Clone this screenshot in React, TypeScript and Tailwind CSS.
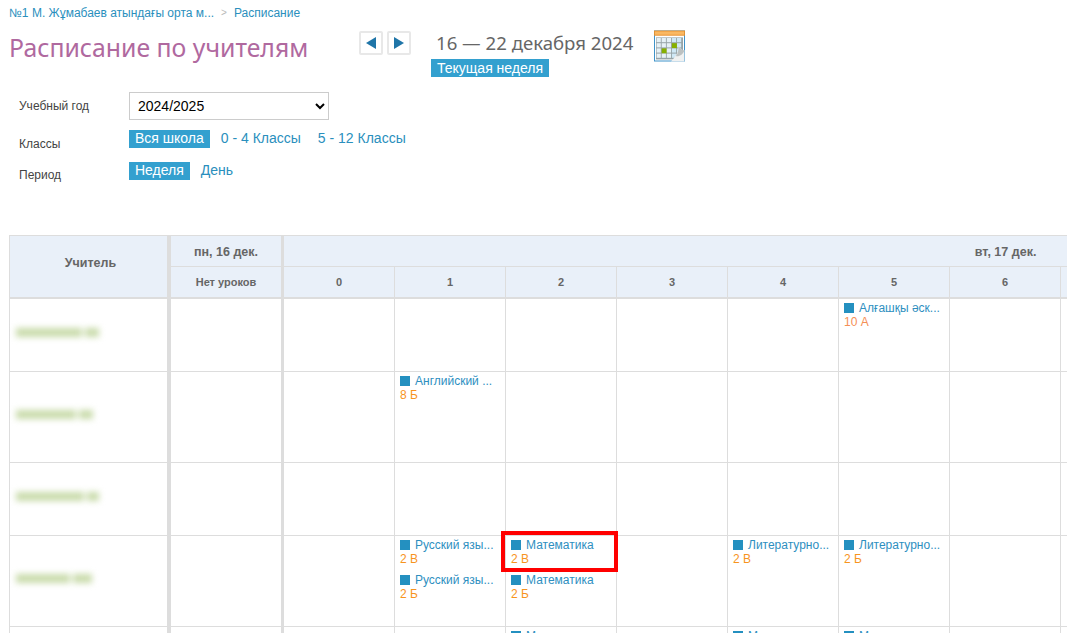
import React from "react";

const periods = [0, 1, 2, 3, 4, 5, 6, 7, 8, 9, 10, 11, 12];

type Lesson = { subject: string; group: string; tone?: string; marked?: boolean };
type Row = {
  height: string;
  bars: string[];
  slots: Record<number, Lesson[]>;
};

const rows: Row[] = [
  {
    height: "h-[73px]",
    bars: ["w-[66px]", "w-[14px]"],
    slots: { 5: [{ subject: "Алғашқы әск...", group: "10 А", tone: "text-[#f58f55]" }] },
  },
  {
    height: "h-[91px]",
    bars: ["w-[60px]", "w-[14px]"],
    slots: { 1: [{ subject: "Английский ...", group: "8 Б" }] },
  },
  {
    height: "h-[73px]",
    bars: ["w-[68px]", "w-[12px]"],
    slots: {},
  },
  {
    height: "h-[91px]",
    bars: ["w-[54px]", "w-[19px]"],
    slots: {
      1: [
        { subject: "Русский язы...", group: "2 В" },
        { subject: "Русский язы...", group: "2 Б" },
      ],
      2: [
        { subject: "Математика", group: "2 В", marked: true },
        { subject: "Математика", group: "2 Б" },
      ],
      4: [{ subject: "Литературно...", group: "2 В" }],
      5: [{ subject: "Литературно...", group: "2 Б" }],
    },
  },
  {
    height: "h-[91px]",
    bars: [],
    slots: {
      2: [{ subject: "Математика", group: "2 В" }],
      4: [{ subject: "Математика", group: "2 В" }],
      5: [{ subject: "Математика", group: "2 Б" }],
    },
  },
];

function ArrowButton({ dir }: { dir: "left" | "right" }) {
  return (
    <button className="flex h-[24px] w-[24px] items-center justify-center rounded-[2px] border-2 border-[#e8e8e8] bg-white">
      <svg width="12" height="14" viewBox="0 0 12 14">
        {dir === "left" ? (
          <path d="M11 1v12L1 7z" fill="#1f75a8" />
        ) : (
          <path d="M1 1v12l10-6z" fill="#1f75a8" />
        )}
      </svg>
    </button>
  );
}

function CalendarIcon() {
  const cells: React.ReactNode[] = [];
  for (let r = 0; r < 4; r++) {
    for (let c = 0; c < 5; c++) {
      const green = (r === 1 && c === 3) || (r === 2 && c === 1);
      cells.push(
        <rect
          key={`${r}-${c}`}
          x={2.6 + c * 5.1}
          y={8 + r * 5.2}
          width={green ? 5 : 4.2}
          height={green ? 5 : 4.2}
          fill={green ? "#86b000" : c > 2 ? "#cfe8f6" : "#e6f1f6"}
        />
      );
    }
  }
  return (
    <svg width="31" height="33" viewBox="0 0 31 33" className="shrink-0">
      <rect x="0.5" y="1" width="30" height="30" fill="#ffffff" stroke="#3f93c9" />
      <rect x="0.4" y="1" width="30.2" height="4.2" fill="#f9b863" stroke="#e88f28" strokeWidth="0.9" />
      <rect x="2" y="7.4" width="27" height="22" fill="#97a4a8" />
      {cells}
      <path d="M17 31.5 L30.5 31.5 L30.5 20 C27.5 21 27 18 24.5 16.5 C24.5 23 21 27 17 31.5z" fill="#f0f1f1" />
      <path d="M21.5 26 C23.5 25 24.5 21 24.5 16.5 C27 18 27.5 21 30.5 20 C29 25 25 27 21.5 26z" fill="#bcc1c1" />
    </svg>
  );
}

function LessonItem({ lesson }: { lesson: Lesson }) {
  return (
    <div className="relative h-[35px] text-[12px] leading-[14px]">
      {lesson.marked && (
        <div className="absolute -left-[10px] -top-[6px] h-[41px] w-[117px] border-4 border-[#ff0000]" />
      )}
      <div className="flex h-[15px] items-center whitespace-nowrap text-[#2e8fbf]">
        <span className="mr-[5px] h-[10px] w-[10px] shrink-0 bg-[#2490c0]" />
        <span>{lesson.subject}</span>
      </div>
      <div className={lesson.tone ?? "text-[#f7941e]"}>{lesson.group}</div>
    </div>
  );
}

function Tag({ children }: { children: React.ReactNode }) {
  return (
    <span className="flex h-[18px] items-center bg-[#33a0cf] px-[6px] text-[14px] text-white">
      {children}
    </span>
  );
}

export default function App() {
  return (
    <div
      className="h-[633px] w-[1067px] overflow-hidden bg-white text-[#333333]"
      style={{ fontFamily: '"Liberation Sans", Arial, sans-serif' }}
    >
      <div className="flex items-center gap-[7px] pl-[9px] pt-[6px] text-[12px] leading-[14px] text-[#2a8fbd]">
        <span>№1 М. Жұмабаев атындағы орта м...</span>
        <span className="text-[10px] text-[#b9b9b9]">&gt;</span>
        <span>Расписание</span>
      </div>

      <div className="flex items-start pl-[9px] pt-[10px]">
        <h1 className="w-[350px] text-[24.8px] leading-[34px] text-[#b0699f] [font-family:'Noto_Sans',sans-serif]">
          Расписание по учителям
        </h1>
        <div className="mt-[1px] flex gap-[4px]">
          <ArrowButton dir="left" />
          <ArrowButton dir="right" />
        </div>
        <div className="ml-[20px] flex w-[223px] flex-col items-start">
          <div className="ml-[5px] whitespace-nowrap text-[18.6px] leading-[26px] text-[#666666] [font-family:'Noto_Sans',sans-serif]">
            16 — 22 декабря 2024
          </div>
          <span className="mt-[3px] flex h-[18px] items-center bg-[#33a0cf] px-[6px] text-[14px] text-white">
            Текущая неделя
          </span>
        </div>
        <CalendarIcon />
      </div>

      <div className="mt-[15px] flex flex-col pl-[19px] text-[12px]">
        <div className="flex items-center">
          <span className="w-[110px] text-[#444444]">Учебный год</span>
          <select className="h-[28px] w-[200px] border border-[#cccccc] bg-white pl-[4px] text-[14px] text-black">
            <option>2024/2025</option>
          </select>
        </div>
        <div className="mt-[8px] flex items-start">
          <span className="w-[110px] pt-[7px] text-[#444444]">Классы</span>
          <div className="flex items-center text-[14px] text-[#2a8fbd]">
            <Tag>Вся школа</Tag>
            <span className="ml-[11px]">0 - 4 Классы</span>
            <span className="ml-[17px]">5 - 12 Классы</span>
          </div>
        </div>
        <div className="mt-[7px] flex items-start">
          <span className="w-[110px] pt-[6px] text-[#444444]">Период</span>
          <div className="flex items-center text-[14px] text-[#2a8fbd]">
            <Tag>Неделя</Tag>
            <span className="ml-[11px]">День</span>
          </div>
        </div>
      </div>

      <div className="ml-[9px] mt-[51px] w-[1058px] overflow-hidden">
        <table className="w-[1718px] table-fixed border-separate border-spacing-0">
          <colgroup>
            <col className="w-[162px]" />
            <col className="w-[113px]" />
            {periods.map((p) => (
              <col key={p} className="w-[111px]" />
            ))}
          </colgroup>
          <thead className="text-[#666666]">
            <tr className="h-[32px]">
              <th
                rowSpan={2}
                className="border-y border-b-2 border-l border-r-4 border-[#dddddd] bg-[#e9f0f9] pb-[6px] pl-[4px] text-[12.5px]"
              >
                Учитель
              </th>
              <th className="border-b border-r-[3px] border-t border-[#dddddd] bg-[#e9f0f9] pt-[2px] text-[12.5px]">
                пн, 16 дек.
              </th>
              <th
                colSpan={13}
                className="border-b border-t border-[#dddddd] bg-[#e9f0f9] pt-[2px] text-[12.5px]"
              >
                вт, 17 дек.
              </th>
            </tr>
            <tr className="h-[32px]">
              <th className="border-b-2 border-r-[3px] border-[#dddddd] bg-[#e9f0f9] text-[11px]">
                Нет уроков
              </th>
              {periods.map((p) => (
                <th
                  key={p}
                  className="border-b-2 border-r border-[#dddddd] bg-[#e9f0f9] text-[11px]"
                >
                  {p}
                </th>
              ))}
            </tr>
          </thead>
          <tbody>
            {rows.map((row, i) => (
              <tr key={i} className={row.height}>
                <td className="border-b border-l border-r-4 border-[#dddddd] px-[6px] pb-[5px] align-middle">
                  <div className="flex items-center gap-[3px] blur-[3px]">
                    {row.bars.map((b, j) => (
                      <span key={j} className={`h-[9px] bg-[#c9dbab] ${b}`} />
                    ))}
                  </div>
                </td>
                <td className="border-b border-r-[3px] border-[#dddddd]" />
                {periods.map((p) => (
                  <td
                    key={p}
                    className="border-b border-r border-[#dddddd] pl-[5px] pt-[1px] align-top"
                  >
                    {(row.slots[p] ?? []).map((l, k) => (
                      <LessonItem key={k} lesson={l} />
                    ))}
                  </td>
                ))}
              </tr>
            ))}
          </tbody>
        </table>
      </div>
    </div>
  );
}
